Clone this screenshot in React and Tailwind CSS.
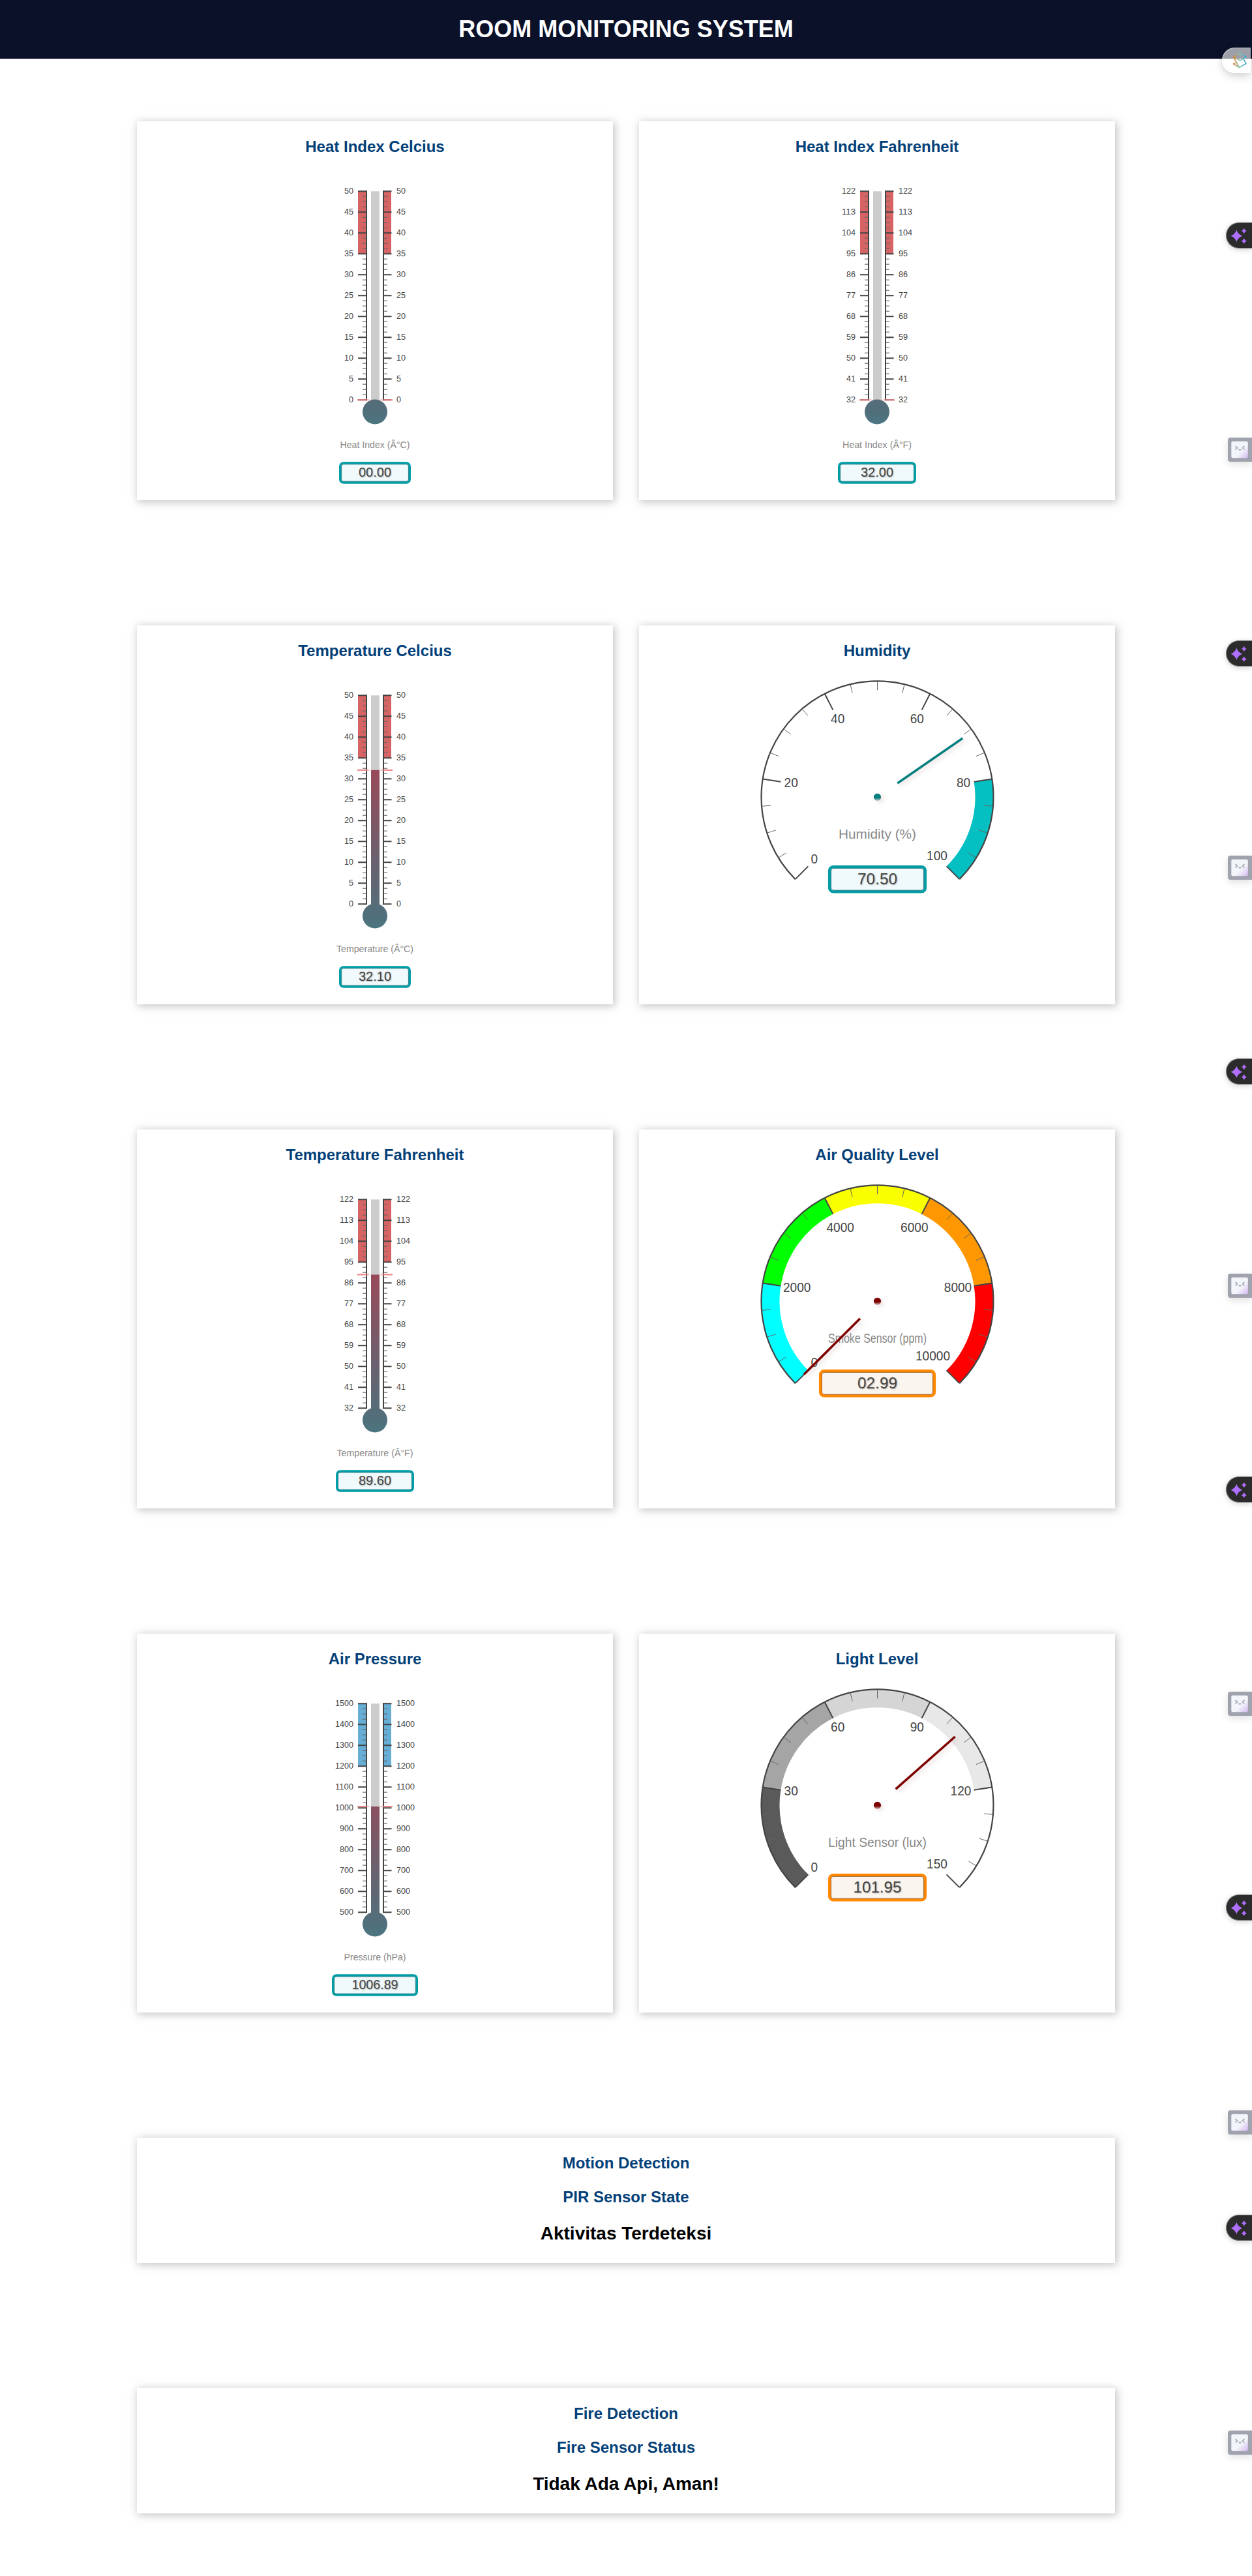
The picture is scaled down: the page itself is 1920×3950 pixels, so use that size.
const F = '"Liberation Sans", Arial, sans-serif';

function Thermo({ min, max, value, hi, color, unit, box, segW = 110, unitW }) {
  const top = 23.3, bot = 343.3, H = bot - top;
  const n = 10;
  const step = (max - min) / n;
  const vy = bot - ((value - min) / (max - min)) * H;
  const id = 'tg' + unit.replace(/[^a-zA-Z]/g, '') + min;
  const hy = bot - ((hi - min) / (max - min)) * H;
  const minors = [];
  for (let i = 0; i < 40; i++) if (i % 4) minors.push(bot - (i * H) / 40);
  return (
    <svg width="160" height="480" viewBox="0 0 160 480" className="block" fontFamily={F}>
      <defs>
        <linearGradient id={id} gradientUnits="userSpaceOnUse" x1="0" y1={top} x2="0" y2={bot + 37}>
          <stop offset="0" stopColor="#b9394a" />
          <stop offset="0.07" stopColor="#b43b4b" />
          <stop offset="0.95" stopColor="#506f7c" />
          <stop offset="1" stopColor="#4c7681" />
        </linearGradient>
        <linearGradient id={id + 'l'}><stop offset="0.6" stopColor="#f08080" /><stop offset="1" stopColor="#f08080" stopOpacity="0" /></linearGradient>
        <linearGradient id={id + 'r'}><stop offset="0" stopColor="#f08080" stopOpacity="0" /><stop offset="0.4" stopColor="#f08080" /></linearGradient>
      </defs>
      <rect x="49" y={top} width="13" height={hy - top} fill={color} />
      <rect x="88" y={top} width="12" height={hy - top} fill={color} />
      <rect x="69" y={top} width="13" height={H + 4} fill="#ccc" />
      {value > min && <rect x="69" y={vy} width="13" height={bot - vy + 4} fill={`url(#${id})`} />}
      <path d={minors.map((y) => `M56 ${y}h5M89 ${y}h5`).join('')} stroke="#666" strokeOpacity="0.75" strokeWidth="1.5" />
      <path d={`M62 ${top - 1}V${bot + 1}M88 ${top - 1}V${bot + 1}`} stroke="#444" strokeWidth="2" />
      {Array.from({ length: n + 1 }, (_, i) => {
        const y = bot - (i * H) / n;
        const label = String(min + i * step);
        return (
          <g key={i} fontSize="13.600" fill="#444">
            <path d={`M49 ${y}H62M88 ${y}H100.500`} stroke="#444" strokeWidth="2" />
            <text x="42" y={y + 4} textAnchor="end" textLength={label.length * 7} lengthAdjust="spacingAndGlyphs">{label}</text>
            <text x="108" y={y + 4} textLength={label.length * 7} lengthAdjust="spacingAndGlyphs">{label}</text>
          </g>
        );
      })}
      <circle cx="75" cy="361.500" r="19" fill={`url(#${id})`} />
      <rect x="48" y={vy - 1} width="21" height="2" fill={`url(#${id}l)`} />
      <rect x="81" y={vy - 1} width="21" height="2" fill={`url(#${id}r)`} />
      <text x="75" y="417" textAnchor="middle" fontSize="14.500" fill="#888" textLength={unitW} lengthAdjust="spacingAndGlyphs">{unit}</text>
      <rect x={75 - segW / 2 + 1.7} y="440" width={segW - 3.4} height="30" rx="5" fill="#f0f9fb" stroke="#009da6" strokeWidth="3.400" />
      <rect x={75 - segW / 2 + 3.6} y="441.900" width={segW - 7.2} height="26.200" rx="3" fill="none" stroke="#0f7077" strokeWidth="0.800" />
      <text x="75" y="461" textAnchor="middle" fontSize="20.500" fill="#444" style={{ textShadow: '1px 1px 2px rgba(0,0,0,.3)' }} textLength={box.length > 5 ? 71 : 50} lengthAdjust="spacingAndGlyphs">{box}</text>
    </svg>
  );
}

function pt(r, v) {
  const a = ((v * 270 + 135) * Math.PI) / 180;
  return [225.5 + r * Math.cos(a), 222.3 + r * Math.sin(a)];
}

function Dial({ id, labels, segs, value, needle, unit, unitW, box, boxW, accent, inner, fill, textW }) {
  return (
    <svg width="450" height="400" viewBox="0 0 450 400" className="block" fontFamily={F}>
      <defs>
        <linearGradient id={id} x1="0" y1="0" x2="0" y2="1"><stop offset="0.6" stopColor={needle} /><stop offset="1" stopColor={needle} stopOpacity="0.35" /></linearGradient>
        <filter id={id + 's'} filterUnits="userSpaceOnUse" x="0" y="0" width="450" height="400"><feDropShadow dx="3" dy="3" stdDeviation="3.500" floodColor="#bc8f8f" floodOpacity="0.35" /></filter>
      </defs>
      {segs.map(([a, b, c], i) => {
        const [x1, y1] = pt(178, a), [x2, y2] = pt(178, b), [x3, y3] = pt(150, b), [x4, y4] = pt(150, a);
        return <path key={i} fill={c} d={`M${x1} ${y1}A178 178 0 0 1 ${x2} ${y2}L${x3} ${y3}A150 150 0 0 0 ${x4} ${y4}Z`} />;
      })}
      <path d={`M${pt(178, 0).join(' ')}A178 178 0 1 1 ${pt(178, 1).join(' ')}`} fill="none" stroke="#444" strokeWidth="2.200" />
      {Array.from({ length: 21 }, (_, i) => {
        const big = i % 4 === 0;
        const [x1, y1] = pt(big ? 178 : 177, i / 20), [x2, y2] = pt(big ? 150 : 164, i / 20);
        return <path key={i} d={`M${x1} ${y1}L${x2} ${y2}`} stroke={big ? '#444' : '#666'} strokeWidth={big ? 2 : 1} />;
      })}
      {labels.map(([t, x, y]) => (
        <text key={t} x={x} y={y} textAnchor="middle" fontSize="19.500" fill="#444" textLength={t.length * 10.6} lengthAdjust="spacingAndGlyphs">{t}</text>
      ))}
      <text x="225.500" y="285.700" textAnchor="middle" fontSize="21" fill="#888" textLength={unitW} lengthAdjust="spacingAndGlyphs">{unit}</text>
      <rect x={225.5 - boxW / 2 + 2} y="329" width={boxW - 4} height="38.500" rx="6" fill={fill} stroke={accent} strokeWidth="4.200" />
      <rect x={225.5 - boxW / 2 + 4.3} y="331.300" width={boxW - 8.6} height="33.900" rx="4" fill="none" stroke={inner} strokeWidth="1" />
      <text x="225.500" y="355.800" textAnchor="middle" fontSize="24.500" fill="#444" style={{ textShadow: '1px 1px 2px rgba(0,0,0,.3)' }} textLength={textW} lengthAdjust="spacingAndGlyphs">{box}</text>
      <g filter={`url(#${id}s)`}>
        <path d={`M${pt(37.5, value).join(' ')}L${pt(159, value).join(' ')}`} stroke={needle} strokeWidth="3.600" />
        <circle cx="225.500" cy="222.300" r="5.600" fill={`url(#${id})`} />
      </g>
    </svg>
  );
}

const CARD = 'bg-white shadow-[2px_2px_12px_1px_rgba(140,140,140,0.5)]';
const TITLE = 'text-[24px] leading-[27px] font-bold text-[#034078]';

function Card({ title, children, dial }) {
  return (
    <section className={`${CARD} flex h-[581px] w-[730px] flex-col items-center pt-[25px]`}>
      <h2 className={TITLE}>{title}</h2>
      <div className={dial ? '-mt-[11px]' : 'mt-[32px] pl-[10px]'}>{children}</div>
    </section>
  );
}

const teal = { accent: '#009da6', inner: '#0f7077', fill: '#f0f9fb' };
const orange = { accent: '#ff8800', inner: '#9b5910', fill: '#fbf5ef' };

function Spark() {
  return (
    <div className="h-[40px] w-[40px] rounded-l-full border border-r-0 border-[#777] bg-[#2b2b2b] shadow-[0_2px_8px_rgba(0,0,0,0.18)]">
      <svg width="39" height="38" viewBox="0 0 39 38" fill="#b070ff">
        <path d="M15.300 10.500Q17.500 17.500 24.300 19.700Q17.500 22 15.300 29Q13 22 6.500 19.700Q13 17.500 15.300 10.500Z" />
        <path d="M26.800 7.700Q27.800 11 31 12.100Q27.800 13.100 26.800 16.500Q25.800 13.100 22.600 12.100Q25.800 11 26.800 7.700ZM26.800 23.300Q27.800 26.600 31 27.700Q27.800 28.700 26.800 32Q25.800 28.700 22.600 27.700Q25.800 26.600 26.800 23.300Z" />
      </svg>
    </div>
  );
}

function Face() {
  return (
    <div className="h-[37px] w-[37px] rounded-l-[4px] bg-[#a0a3ae] shadow-[0_4px_12px_rgba(0,0,0,0.12)]">
      <svg width="37" height="37" viewBox="0 0 37 37">
        <defs><linearGradient id="face" x1="0" y1="0" x2="1" y2="1"><stop offset="0.6" stopColor="#f2f5fa" /><stop offset="1" stopColor="#d5b8f0" /></linearGradient></defs>
        <rect x="5.300" y="5.700" width="25.500" height="25.500" rx="2.500" fill="url(#face)" />
        <path d="M11.500 13L14.500 15.700L11.500 18.500M25.500 13L22.500 15.700L25.500 18.500M16.500 18Q18.500 20 20.500 18" stroke="#a8abb2" strokeWidth="1.700" fill="none" />
      </svg>
    </div>
  );
}

function Slides() {
  return (
    <div className="h-[39px] w-[44px] rounded-l-full border border-r-0 border-white/60 bg-white/60 shadow-[0_4px_14px_rgba(0,0,0,0.2)]">
      <svg width="43" height="37" viewBox="0 0 43 37" fill="none" strokeWidth="1.600" strokeLinejoin="round">
        <defs><linearGradient id="sl" gradientUnits="userSpaceOnUse" x1="16" y1="0" x2="36" y2="0"><stop stopColor="#e3812f" /><stop offset="0.5" stopColor="#80c8b0" /><stop offset="1" stopColor="#43a9cf" /></linearGradient></defs>
        <path stroke="url(#sl)" d="M16.500 13.500L26 8L36 13L27 18.800ZM16.500 13.500L25.500 29.500L36 23.500L32 16.500M21 21.500L16.500 24L25.500 29.500" />
      </svg>
    </div>
  );
}

const sparks = [341, 982, 1623, 2264, 2905, 3396];
const faces = [671, 1312, 1953, 2594, 3236, 3727];

export default function App() {
  return (
    <div className="relative h-[3950px] w-[1920px] overflow-hidden bg-white font-['Liberation_Sans',Arial,sans-serif]">
      <header className="flex h-[90px] items-center justify-center bg-[#0a1128] text-[36px] font-bold text-white">ROOM MONITORING SYSTEM</header>
      <main className="flex flex-col items-center pt-[96px]">
        <div className="grid grid-cols-[730px_730px] gap-x-[40px] gap-y-[192px]">
          <Card title="Heat Index Celcius"><Thermo min={0} max={50} value={0} hi={35} color="#d66464" unit="Heat Index (Â°C)" unitW={107} box="00.00" /></Card>
          <Card title="Heat Index Fahrenheit"><Thermo min={32} max={122} value={32} hi={95} color="#d66464" unit="Heat Index (Â°F)" unitW={106} box="32.00" segW={120} /></Card>
          <Card title="Temperature Celcius"><Thermo min={0} max={50} value={32.1} hi={35} color="#d66464" unit="Temperature (Â°C)" unitW={118} box="32.10" /></Card>
          <Card title="Humidity" dial><Dial id="hum" {...teal} labels={[['0', 128.7, 323.7], ['20', 93.2, 206.7], ['40', 164.7, 108.7], ['60', 286.3, 108.7], ['80', 357.5, 206.7], ['100', 317, 319]]} segs={[[0.8, 1, '#04c0c2']]} value={0.705} needle="#008080" unit="Humidity (%)" unitW={119} box="70.50" textW={61} boxW={151} /></Card>
          <Card title="Temperature Fahrenheit"><Thermo min={32} max={122} value={89.6} hi={95} color="#d66464" unit="Temperature (Â°F)" unitW={117} box="89.60" segW={120} /></Card>
          <Card title="Air Quality Level" dial><Dial id="air" {...orange} labels={[['0', 128.7, 323.3], ['2000', 102.2, 207.7], ['4000', 168.7, 115.7], ['6000', 282.3, 115.7], ['8000', 349, 207.7], ['10000', 310.5, 312.7]]} segs={[[0, 0.2, '#00ffff'], [0.2, 0.4, '#00ff00'], [0.4, 0.6, '#faff00'], [0.6, 0.8, '#ff9800'], [0.8, 1, '#ff0000']]} value={0.0003} needle="#800000" unit="Smoke Sensor (ppm)" unitW={151} box="02.99" textW={61} boxW={179} /></Card>
          <Card title="Air Pressure"><Thermo min={500} max={1500} value={1006.89} hi={1200} color="#66aed6" unit="Pressure (hPa)" unitW={95} box="1006.89" segW={132} /></Card>
          <Card title="Light Level" dial><Dial id="light" {...orange} labels={[['0', 128.7, 323.7], ['30', 93.2, 206.7], ['60', 164.7, 108.7], ['90', 286.3, 108.7], ['120', 353.500, 206.7], ['150', 317, 319]]} segs={[[0, 0.2, '#5a5a5a'], [0.2, 0.4, '#a5a5a5'], [0.4, 0.6, '#d5d5d5'], [0.6, 0.8, '#e8e8e8']]} value={0.6797} needle="#800000" unit="Light Sensor (lux)" unitW={151} box="101.95" textW={74} boxW={151} /></Card>
        </div>
        {[['Motion Detection', 'PIR Sensor State', 'Aktivitas Terdeteksi'], ['Fire Detection', 'Fire Sensor Status', 'Tidak Ada Api, Aman!']].map(([a, b, c]) => (
          <section key={a} className={`${CARD} mt-[192px] flex h-[192px] w-[1500px] flex-col items-center pt-[25px]`}>
            <h2 className={TITLE}>{a}</h2>
            <h2 className={`${TITLE} mt-[25px]`}>{b}</h2>
            <p className="mt-[27px] text-[28px] leading-[32px] font-bold text-black">{c}</p>
          </section>
        ))}
      </main>
      <div className="absolute top-[73px] right-[2px]"><Slides /></div>
      {sparks.map((y) => <div key={y} className="absolute right-0" style={{ top: y }}><Spark /></div>)}
      {faces.map((y) => <div key={y} className="absolute right-0" style={{ top: y }}><Face /></div>)}
    </div>
  );
}
